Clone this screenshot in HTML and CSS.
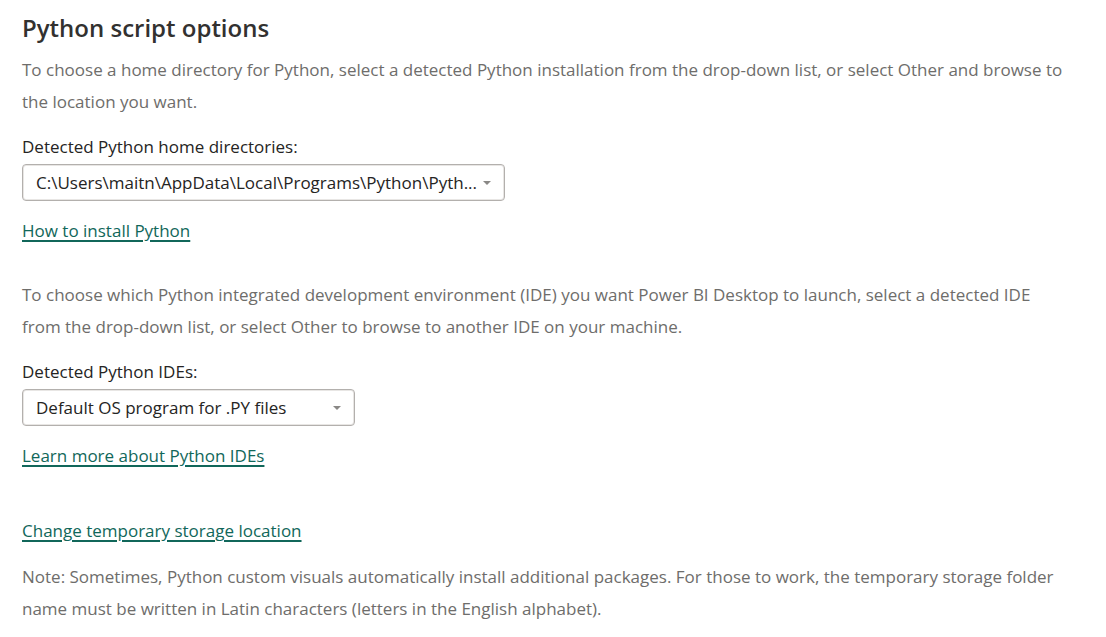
FILE: index.html
```html
<!DOCTYPE html>
<html lang="en">
<head>
    <meta charset="UTF-8">
    <title>Python script options</title>
    <link rel="stylesheet" href="styles.css">
</head>
<body>
    <div class="options">
        <h2>Python script options</h2>
        <p class="desc">To choose a home directory for Python, select a detected Python installation from the drop-down list, or select Other and browse to the location you want.</p>

        <label class="field-label">Detected Python home directories:</label>
        <div class="dropdown dropdown-wide">
            <span class="dropdown-text">C:\Users\maitn\AppData\Local\Programs\Python\Pyth...</span>
            <span class="caret"></span>
        </div>
        <a class="link" href="#">How to install Python</a>

        <p class="desc section-gap">To choose which Python integrated development environment (IDE) you want Power BI Desktop to launch, select a detected IDE from the drop-down list, or select Other to browse to another IDE on your machine.</p>

        <label class="field-label">Detected Python IDEs:</label>
        <div class="dropdown dropdown-narrow">
            <span class="dropdown-text">Default OS program for .PY files</span>
            <span class="caret"></span>
        </div>
        <a class="link" href="#">Learn more about Python IDEs</a>

        <a class="link link-alone" href="#">Change temporary storage location</a>
        <p class="desc note">Note: Sometimes, Python custom visuals automatically install additional packages. For those to work, the temporary storage folder name must be written in Latin characters (letters in the English alphabet).</p>
    </div>
</body>
</html>
```

FILE: styles.css
```css
body {
    margin: 0;
    padding: 0;
    background: #ffffff;
    font-family: 'Open Sans', 'Noto Sans', sans-serif;
    color: #252423;
}

.options {
    width: 1048px;
    padding: 10px 22px 0 22px;
}

h2 {
    margin: 0;
    font-size: 24px;
    font-weight: 600;
    line-height: 36px;
    color: #323130;
}

.desc {
    margin: 8px 0 0 0;
    font-size: 17px;
    line-height: 32px;
    color: #6e6d6b;
}

.section-gap {
    margin-top: 36px;
}

.note {
    margin-top: 18px;
}

.field-label {
    display: block;
    margin-top: 17px;
    font-size: 17px;
    line-height: 24px;
    color: #252423;
}

.dropdown {
    display: flex;
    align-items: center;
    justify-content: space-between;
    box-sizing: border-box;
    height: 37px;
    margin-top: 5px;
    padding: 0 13px 0 13px;
    border: 1px solid #b3b0ad;
    border-radius: 4px;
    box-shadow: inset 0 0 0 1px #e8e6e4;
}

.dropdown-wide {
    width: 483px;
}

.dropdown-narrow {
    width: 333px;
}

.dropdown-text {
    font-size: 17px;
    color: #252423;
    white-space: nowrap;
}

.caret {
    width: 0;
    height: 0;
    border-left: 4px solid transparent;
    border-right: 4px solid transparent;
    border-top: 4px solid #8a8886;
}

.link {
    display: block;
    width: fit-content;
    margin-top: 18px;
    font-size: 17px;
    line-height: 24px;
    color: #11675a;
    text-decoration: underline;
    text-decoration-thickness: 2px;
    text-underline-offset: 3px;
}

.link-alone {
    margin-top: 51px;
}
```
